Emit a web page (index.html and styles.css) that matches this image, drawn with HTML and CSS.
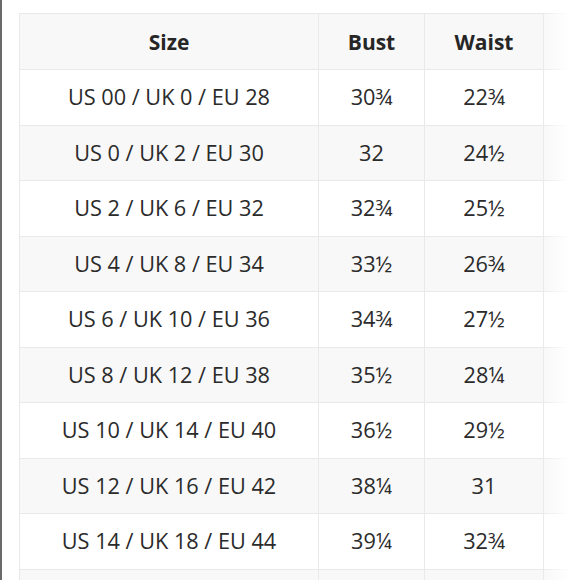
FILE: index.html
```html
<!DOCTYPE html>
<html>
<head>
<meta charset="utf-8">
<link rel="stylesheet" href="styles.css">
</head>
<body>
<div class="page">
  <div class="edge"></div>
  <div class="wrap">
    <table class="chart">
      <thead>
        <tr><th class="c1">Size</th><th class="c2">Bust</th><th class="c3">Waist</th><th class="c4"></th></tr>
      </thead>
      <tbody>
        <tr><td>US 00 / UK 0 / EU 28</td><td>30¾</td><td>22¾</td><td></td></tr>
        <tr><td>US 0 / UK 2 / EU 30</td><td>32</td><td>24½</td><td></td></tr>
        <tr><td>US 2 / UK 6 / EU 32</td><td>32¾</td><td>25½</td><td></td></tr>
        <tr><td>US 4 / UK 8 / EU 34</td><td>33½</td><td>26¾</td><td></td></tr>
        <tr><td>US 6 / UK 10 / EU 36</td><td>34¾</td><td>27½</td><td></td></tr>
        <tr><td>US 8 / UK 12 / EU 38</td><td>35½</td><td>28¼</td><td></td></tr>
        <tr><td>US 10 / UK 14 / EU 40</td><td>36½</td><td>29½</td><td></td></tr>
        <tr><td>US 12 / UK 16 / EU 42</td><td>38¼</td><td>31</td><td></td></tr>
        <tr><td>US 14 / UK 18 / EU 44</td><td>39¼</td><td>32¾</td><td></td></tr>
        <tr><td></td><td></td><td></td><td></td></tr>
      </tbody>
    </table>
    <div class="fade"></div>
  </div>
</div>
</body>
</html>
```
FILE: styles.css
```css
html, body {
  margin: 0;
  padding: 0;
  background: #ffffff;
}
.page {
  width: 580px;
  height: 580px;
  overflow: hidden;
  display: flex;
  position: relative;
  font-family: "Open Sans", "Noto Sans", sans-serif;
  color: #2b2b2b;
}
.edge {
  width: 2px;
  flex: none;
  background: #6a6a6a;
}
.wrap {
  position: relative;
  flex: 1;
  padding: 13px 0 0 17px;
  overflow: hidden;
}
.chart {
  border-collapse: collapse;
  table-layout: fixed;
  width: 697px;
}
.chart th, .chart td {
  border: 1px solid #e9e9e9;
  text-align: center;
  vertical-align: middle;
  padding: 0;
  font-size: 21.7px;
  line-height: 24px;
  white-space: nowrap;
}
.chart th {
  height: 55px;
  font-weight: 700;
  font-size: 21px;
  color: #262626;
  background: #f8f8f8;
}
.chart td {
  height: 54.5px;
  font-weight: 400;
}
.chart tbody tr:nth-child(even) td {
  background: #f8f8f8;
}
.c1 { width: 298px; }
.c2 { width: 105px; }
.c3 { width: 118px; }
.c4 { width: 176px; }
.fade {
  position: absolute;
  top: 0;
  right: 0;
  width: 38px;
  height: 100%;
  background: linear-gradient(to right, rgba(255,255,255,0), rgba(255,255,255,0.97) 70%);
}
```
